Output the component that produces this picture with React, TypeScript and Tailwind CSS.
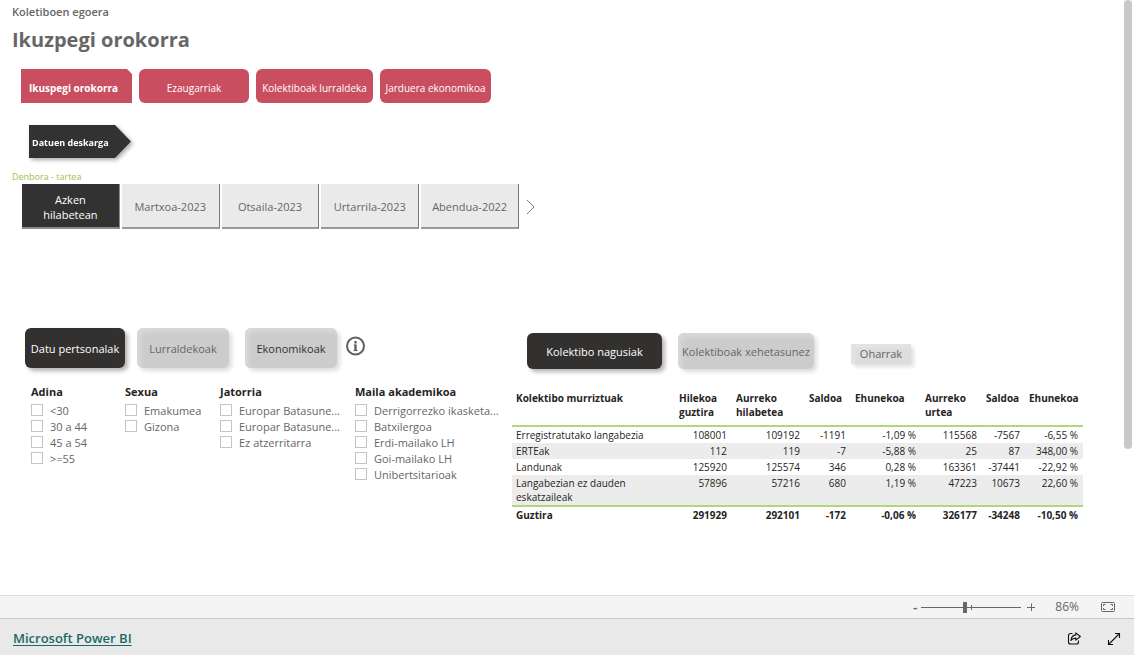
import { useState } from 'react';
import clsx from 'clsx';

interface FilterGroup {
  title: string;
  options: string[];
}

interface TableRow {
  name: string;
  values: string[];
}

const periods = ['Azken hilabetean', 'Martxoa-2023', 'Otsaila-2023', 'Urtarrila-2023', 'Abendua-2022'];

const filterGroups: FilterGroup[] = [
  { title: 'Adina', options: ['<30', '30 a 44', '45 a 54', '>=55'] },
  { title: 'Sexua', options: ['Emakumea', 'Gizona'] },
  { title: 'Jatorria', options: ['Europar Batasune...', 'Europar Batasune...', 'Ez atzerritarra'] },
  {
    title: 'Maila akademikoa',
    options: ['Derrigorrezko ikasketa...', 'Batxilergoa', 'Erdi-mailako LH', 'Goi-mailako LH', 'Unibertsitarioak'],
  },
];

const columns = ['Hilekoa guztira', 'Aurreko hilabetea', 'Saldoa', 'Ehunekoa', 'Aurreko urtea', 'Saldoa', 'Ehunekoa'];

const rows: TableRow[] = [
  {
    name: 'Erregistratutako langabezia',
    values: ['108001', '109192', '-1191', '-1,09 %', '115568', '-7567', '-6,55 %'],
  },
  { name: 'ERTEak', values: ['112', '119', '-7', '-5,88 %', '25', '87', '348,00 %'] },
  { name: 'Landunak', values: ['125920', '125574', '346', '0,28 %', '163361', '-37441', '-22,92 %'] },
  {
    name: 'Langabezian ez dauden eskatzaileak',
    values: ['57896', '57216', '680', '1,19 %', '47223', '10673', '22,60 %'],
  },
];

const totals = ['291929', '292101', '-172', '-0,06 %', '326177', '-34248', '-10,50 %'];

const navButton = 'h-[34px] rounded-md bg-[#c94f60] pt-1 text-[10px] text-white whitespace-nowrap';
const darkButton = 'rounded-md bg-[#323130] pt-0.5 text-[11px] text-white whitespace-nowrap shadow-[3px_3px_4px_#b9b3b1]';
const grayButton =
  'rounded-md bg-[#cccccc] pt-0.5 text-[11px] whitespace-nowrap shadow-[3px_3px_4px_#dddddd,inset_4px_4px_4px_#d8d8d8]';

function PageNav() {
  return (
    <nav className="mt-[15px] ml-[21px] flex gap-[7px]">
      <button
        className="h-[34px] w-[111px] bg-[#c94f60] pt-1 pr-1.5 text-[10px] font-bold text-white whitespace-nowrap [clip-path:polygon(0_0,calc(100%-5px)_0,100%_5px,100%_100%,0_100%)]"
      >
        Ikuspegi orokorra
      </button>
      <button className={clsx(navButton, 'w-[110px]')}>Ezaugarriak</button>
      <button className={clsx(navButton, 'w-[117px]')}>Kolektiboak lurraldeka</button>
      <button className={clsx(navButton, 'w-[111px]')}>Jarduera ekonomikoa</button>
    </nav>
  );
}

function PeriodSlicer() {
  const [selected, setSelected] = useState(0);

  return (
    <div className="ml-[22px] flex items-center">
      <div className="grid w-[497px] grid-cols-5 gap-0.5">
        {periods.map((period, i) => (
          <button
            key={period}
            onClick={() => setSelected(i)}
            className={clsx(
              'h-[45px] border-r border-b-2 px-2.5 pt-0.5 text-[11px] leading-[15px]',
              i === selected
                ? 'border-[#8a8a8a] bg-[#323232] text-white'
                : 'border-r-[#777777] border-b-[#999999] bg-[#eaeaea] text-[#666666]'
            )}
          >
            {i === 0 ? <span className="block px-2">{period}</span> : period}
          </button>
        ))}
      </div>
      <button aria-label="Hurrengoa" className="ml-[7px] text-[#777777]">
        <svg width="9" height="16" viewBox="0 0 9 16" fill="none" stroke="currentColor">
          <path d="M1 1l7 7-7 7" />
        </svg>
      </button>
    </div>
  );
}

function Filter({ title, options }: FilterGroup) {
  return (
    <fieldset className="min-w-0">
      <legend className="text-[11px] leading-4 font-bold text-[#252423]">{title}</legend>
      <div className="mt-0.5">
        {options.map((option, i) => (
          <label key={i} className="flex h-4 items-center gap-[7px] text-[11px] text-[#666666] whitespace-nowrap">
            <input
              type="checkbox"
              className="size-3 shrink-0 appearance-none border border-[#c4c4c4] bg-white checked:bg-[#666666]"
            />
            <span className="pt-0.5">{option}</span>
          </label>
        ))}
      </div>
    </fieldset>
  );
}

function FilterPanel() {
  return (
    <section className="w-[512px] shrink-0">
      <div className="ml-[25px] flex items-center">
        <button className={clsx(darkButton, 'h-10 w-[100px]')}>Datu pertsonalak</button>
        <button className={clsx(grayButton, 'ml-3 h-10 w-[92px] text-[#666666]')}>Lurraldekoak</button>
        <button className={clsx(grayButton, 'ml-4 h-10 w-[92px] text-[#333333]')}>Ekonomikoak</button>
        <button aria-label="Informazioa" className="ml-2 pb-1">
          <svg width="20" height="20" viewBox="0 0 20 20" fill="none">
            <circle cx="10.500" cy="10" r="8.500" stroke="#5f5f5f" strokeWidth="2" />
            <path d="M10.500 5v2.400M10.500 8.500v6.500" stroke="#5f5f5f" strokeWidth="2.400" />
            <path d="M8.800 9h1.700M8.500 14.600h4" stroke="#5f5f5f" />
          </svg>
        </button>
      </div>
      <div className="mt-4 ml-[31px] grid grid-cols-[94px_95px_135px_1fr]">
        {filterGroups.map((group) => (
          <Filter key={group.title} {...group} />
        ))}
      </div>
    </section>
  );
}

function SummaryTable() {
  return (
    <table className="mt-5 w-full table-fixed text-[10px] leading-[14px] text-[#252423]">
      <colgroup>
        <col className="w-[163px]" />
        <col className="w-[57px]" />
        <col className="w-[73px]" />
        <col className="w-[46px]" />
        <col className="w-[70px]" />
        <col className="w-[61px]" />
        <col className="w-[43px]" />
        <col className="w-[58px]" />
      </colgroup>
      <thead>
        <tr className="h-[37px] border-b-2 border-[#b5d57c] text-left align-top">
          <th className="px-1 pt-0.5">Kolektibo murriztuak</th>
          {columns.map((column, i) => (
            <th key={i} className="pt-0.5 pl-1">
              {column}
            </th>
          ))}
        </tr>
      </thead>
      <tbody>
        {rows.map((row) => (
          <tr key={row.name} className="align-top even:bg-[#ececec]">
            <td className="py-px pr-6 pl-1">{row.name}</td>
            {row.values.map((value, i) => (
              <td key={i} className="py-px pr-[5px] text-right whitespace-nowrap">
                {value}
              </td>
            ))}
          </tr>
        ))}
      </tbody>
      <tfoot>
        <tr className="border-t-2 border-[#b5d57c] font-bold">
          <td className="py-px pl-1">Guztira</td>
          {totals.map((value, i) => (
            <td key={i} className="py-px pr-[5px] text-right whitespace-nowrap">
              {value}
            </td>
          ))}
        </tr>
      </tfoot>
    </table>
  );
}

function SummaryPanel() {
  return (
    <section className="mt-[5px] mr-[41px] min-w-0 flex-1">
      <div className="ml-[15px] flex items-center">
        <button className={clsx(darkButton, 'h-9 w-[135px]')}>Kolektibo nagusiak</button>
        <button className={clsx(grayButton, 'ml-4 h-9 w-[136px] text-[#666666]')}>Kolektiboak xehetasunez</button>
        <button className="mt-1.5 ml-[37px] h-5 w-[60px] bg-[#dddddd] text-[11px] text-[#666666] shadow-[3px_3px_4px_#e0e0e0,inset_4px_4px_4px_#e4e4e4]">
          Oharrak
        </button>
      </div>
      <SummaryTable />
    </section>
  );
}

function ZoomBar() {
  const [position, setPosition] = useState(43);

  return (
    <div className="flex h-6 items-center justify-end border-y border-t-[#dcdcdc] border-b-[#c8c8c8] bg-[#f4f4f4] pr-[18px] text-[#666666]">
      <button aria-label="Txikiagotu" className="w-2 text-sm font-semibold">
        -
      </button>
      <div className="relative ml-0.5 flex w-[100px] items-center">
        <input
          type="range"
          aria-label="Zooma"
          value={position}
          onChange={(e) => setPosition(Number(e.target.value))}
          className="h-[11px] w-full appearance-none bg-[linear-gradient(#666666,#666666)] bg-[length:100%_1px] bg-center bg-no-repeat [&::-webkit-slider-thumb]:h-[11px] [&::-webkit-slider-thumb]:w-1 [&::-webkit-slider-thumb]:appearance-none [&::-webkit-slider-thumb]:bg-[#666666]"
        />
        <span className="absolute left-1/2 h-[5px] w-px bg-[#666666]" />
      </div>
      <button aria-label="Handitu" className="ml-1.5">
        <svg width="8" height="8" viewBox="0 0 8 8" stroke="currentColor">
          <path d="M0 4.5h8M4.5 0.5v8" />
        </svg>
      </button>
      <span className="ml-5 text-xs">86%</span>
      <button aria-label="Doitu orrira" className="ml-[22px]">
        <svg width="15" height="12" viewBox="0 0 15 12" fill="none" stroke="currentColor">
          <rect x="0.5" y="1.5" width="13" height="9" rx="1" />
          <path d="M2.500 5v-1.500h2M9.500 3.500h2v1.500M11.500 7v1.500h-2M4.500 8.500h-2v-1.500" />
        </svg>
      </button>
    </div>
  );
}

function Footer() {
  return (
    <footer className="flex h-9 items-center bg-[#e9e9e9] px-[13px] pt-1">
      <a href="#" className="text-[13px] font-semibold text-[#1b6a67] underline underline-offset-2">
        Microsoft Power BI
      </a>
      <button aria-label="Partekatu" className="ml-auto">
        <svg width="14" height="14" viewBox="0 0 14 14" fill="none" stroke="#111111" strokeWidth="1.1" strokeLinejoin="round">
          <path d="M5.5 1.500H3.500A2 2 0 0 0 1.500 3.500V10A2 2 0 0 0 3.500 12H9.500A2 2 0 0 0 11.500 10V8.500" />
          <path d="M8.800 0.800L13.300 4.500L8.800 8.200V6.100C6.800 6 5.300 6.800 4 8.500C4.200 5.600 5.900 3.200 8.800 2.900Z" />
        </svg>
      </button>
      <button aria-label="Pantaila osoa" className="ml-[26px]">
        <svg width="14" height="14" viewBox="0 0 14 14" fill="none" stroke="#111111" strokeWidth="1.1">
          <path d="M1.500 12.500L12.500 1.500M8 1.500h4.500V6M1.500 8v4.500H6" />
        </svg>
      </button>
    </footer>
  );
}

export default function App() {
  return (
    <div className="flex min-h-screen flex-col bg-white font-['Open_Sans',sans-serif]">
      <div className="flex flex-1">
        <main className="min-w-0 flex-1">
          <h2 className="mt-1 ml-3 text-[11px] leading-4 font-semibold text-[#666666]">Koletiboen egoera</h2>
          <h1 className="mt-1.5 ml-3 text-xl leading-7 font-bold text-[#666666]">Ikuzpegi orokorra</h1>
          <PageNav />
          <div className="mt-[22px] ml-[29px] drop-shadow-[2px_2px_2px_#b0a8a8]">
            <button className="flex h-[33px] w-[102px] items-center bg-[#323232] pt-0.5 pl-[3px] text-[9px] font-bold text-white whitespace-nowrap [clip-path:polygon(0_0,calc(100%-16px)_0,100%_50%,calc(100%-16px)_100%,0_100%)]">
              Datuen deskarga
            </button>
          </div>
          <p className="mt-3 ml-3 text-[9px] leading-[14px] text-[#9dc24f]">Denbora - tartea</p>
          <PeriodSlicer />
          <div className="mt-[99px] flex">
            <FilterPanel />
            <SummaryPanel />
          </div>
        </main>
        <div className="w-2.5 shrink-0">
          <div className="h-[449px] w-2 rounded-full bg-[#c8c8c8]" />
        </div>
      </div>
      <ZoomBar />
      <Footer />
    </div>
  );
}
